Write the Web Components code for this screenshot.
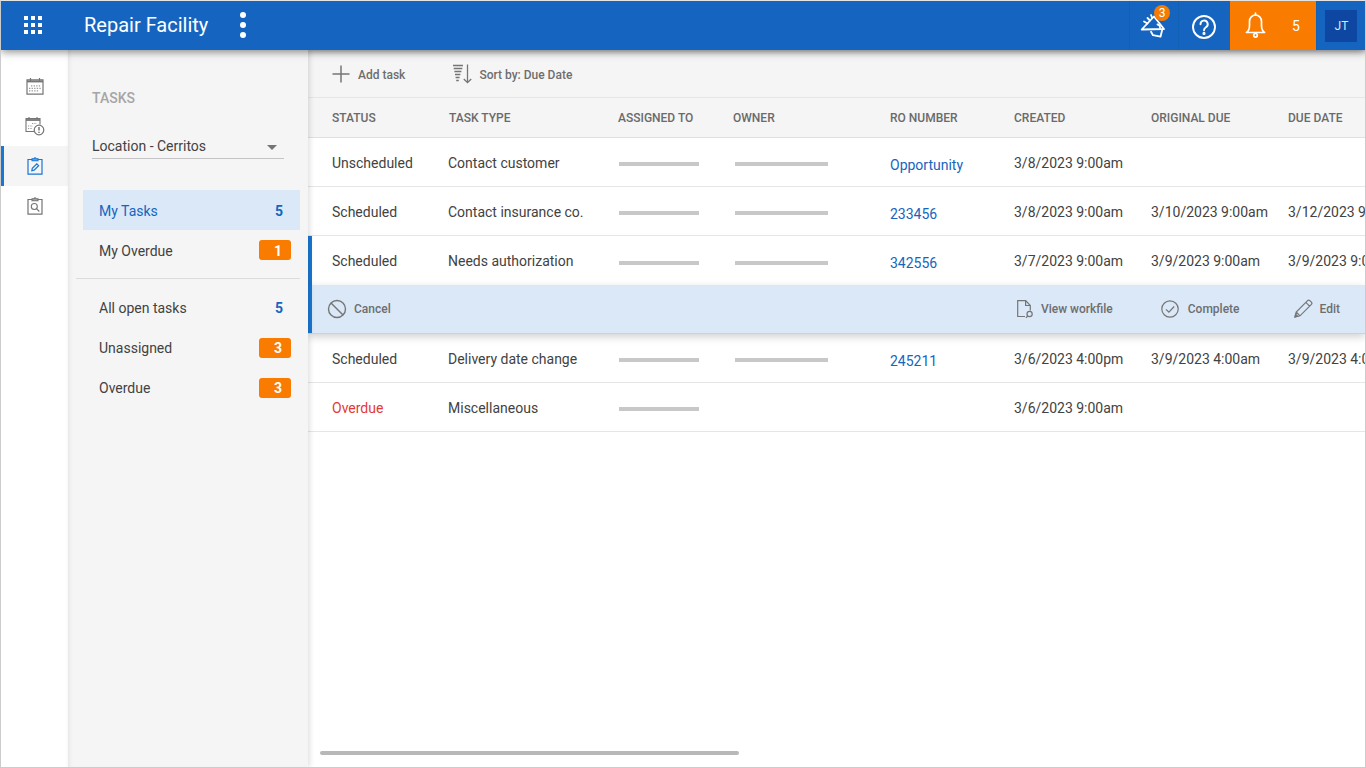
<!DOCTYPE html>
<html lang="en"><head><meta charset="utf-8"><title>Repair Facility</title>
<style>
html,body{margin:0;padding:0;height:100%;background:#fff;overflow:hidden}
body{font-family:Roboto,"Liberation Sans",sans-serif;font-size:14px;color:#424242}
</style></head><body>
<app-shell>
  <top-bar slot="top"></top-bar>
  <nav-rail slot="rail"></nav-rail>
  <task-sidebar slot="side"></task-sidebar>
  <task-main slot="main">
    <task-toolbar></task-toolbar>
    <task-head></task-head>
    <task-row status="Unscheduled" type="Contact customer" a="1" o="1" ro="Opportunity" created="3/8/2023 9:00am"></task-row>
    <task-row status="Scheduled" type="Contact insurance co." a="1" o="1" ro="233456" created="3/8/2023 9:00am" orig="3/10/2023 9:00am" due="3/12/2023 9:00am"></task-row>
    <task-row selected status="Scheduled" type="Needs authorization" a="1" o="1" ro="342556" created="3/7/2023 9:00am" orig="3/9/2023 9:00am" due="3/9/2023 9:00am"></task-row>
    <task-actions></task-actions>
    <task-row status="Scheduled" type="Delivery date change" a="1" o="1" ro="245211" created="3/6/2023 4:00pm" orig="3/9/2023 4:00am" due="3/9/2023 4:00am"></task-row>
    <task-row overdue status="Overdue" type="Miscellaneous" a="1" created="3/6/2023 9:00am"></task-row>
  </task-main>
</app-shell>
<script>
const ICONS={
 plus:'<svg viewBox="0 0 20 20" width="20" height="20" fill="none" stroke="#757575" stroke-width="1.5"><path d="M10 1.500v17M1.500 10h17"/></svg>',
 sort:'<svg viewBox="0 0 22 22" width="22" height="22" fill="none" stroke="#757575" stroke-width="1.3"><path d="M1 2.500h10M1.700 5.500h8.600M2.400 8.500h7M3 11.500h5.400M3.600 14.500h4M4.200 17.500h2.600M15.500 1.500v18M11.800 16l3.700 3.700 3.700-3.700"/></svg>',
 cancel:'<svg viewBox="0 0 20 20" width="20" height="20" fill="none" stroke="#757575" stroke-width="1.4"><circle cx="10" cy="10" r="8.500"/><path d="M4 4l12 12"/></svg>',
 file:'<svg viewBox="0 0 20 20" width="20" height="20" fill="none" stroke="#757575" stroke-width="1.2"><path d="M10 17.500H2.700V1.700h8l4.600 4.800v5M10.600 1.700v4.800h4.700"/><circle cx="14.600" cy="15" r="2.600"/><path d="M12.700 17l-1.800 1.800"/></svg>',
 check:'<svg viewBox="0 0 20 20" width="20" height="20" fill="none" stroke="#757575" stroke-width="1.2"><circle cx="10" cy="10" r="8.200"/><path d="M6 10.300l2.900 2.900L14.200 7.500"/></svg>',
 pencil:'<svg viewBox="0 0 20 20" width="20" height="20" fill="none" stroke="#757575" stroke-width="1.2"><path d="M2 18l1.200-5L14.600 1.600a1.600 1.600 0 0 1 2.200 0l1.600 1.600a1.600 1.600 0 0 1 0 2.200L7 16.800zM3.200 13L7 16.800M12.800 3.400l3.800 3.800"/><path d="M2 18l2.600-.7-1.900-1.900z" fill="#757575"/></svg>',
 apps:'<svg viewBox="0 0 18 18" width="18" height="18" fill="#fff"><path d="M0 0h4v4H0zM7 0h4v4H7zM14 0h4v4h-4zM0 7h4v4H0zM7 7h4v4H7zM14 7h4v4h-4zM0 14h4v4H0zM7 14h4v4H7zM14 14h4v4h-4z"/></svg>',
 kebab:'<svg viewBox="0 0 6 26" width="6" height="26" fill="#fff"><circle cx="3" cy="3" r="3"/><circle cx="3" cy="13" r="3"/><circle cx="3" cy="23" r="3"/></svg>',
 horn:'<svg viewBox="0 0 28 28" width="28" height="28" fill="none" stroke="#fff" stroke-width="1.800" stroke-linejoin="round" stroke-linecap="round"><path d="M2.700 17.500L15 4.500l10 12.500z"/><path d="M12 19.800l2 3.400 7.500 1.500 1.600-6.400"/><path d="M18.500 12.500a3 3 0 0 1 2.500 3.500"/><path d="M5 9.500l3.500 2M8.500 6l2.500 2.500M12 3l1 2.500"/></svg>',
 help:'<svg viewBox="0 0 26 26" width="26" height="26" fill="none" stroke="#fff" stroke-width="1.900" stroke-linecap="round"><circle cx="13" cy="13" r="11"/><path d="M9.500 10.200a3.600 3.600 0 1 1 5.400 3.100c-1.300.8-1.900 1.500-1.900 2.900"/><circle cx="13" cy="19.400" r=".6" fill="#fff"/></svg>',
 bell:'<svg viewBox="0 0 22 28" width="22" height="28" fill="none" stroke="#fff" stroke-width="1.700" stroke-linejoin="round"><path d="M1.500 20.500c2-1.500 3-3.500 3-7V9.500a6 6.500 0 0 1 12 0v4c0 3.500 1 5.500 3 7z"/><path d="M10.500 1v2" stroke-linecap="round"/><circle cx="10.500" cy="23.300" r="1.800"/></svg>',
 cal:'<svg viewBox="0 0 18 18" width="18" height="18" fill="none" stroke="#757575"><path stroke-width="1.200" d="M1 2.800h16v14.400H1z"/><path stroke-width="2" d="M1 4.400h16"/><path stroke-width="1.200" d="M4.500 1v3M13.500 1v3"/><path stroke-width="1.300" stroke-opacity=".75" stroke-dasharray="1.300 1.300" d="M5 8.800h10M3 11.300h12M3 13.800h10"/></svg>',
 calwarn:'<svg viewBox="0 0 20 20" width="20" height="20" fill="none" stroke="#757575"><path stroke-width="1.100" d="M9 15.500H1V2.500h14v6"/><path stroke-width="1.800" d="M1 4h14"/><path stroke-width="1.100" d="M4 1v2.500M12 1v2.500"/><path stroke-width="1.200" stroke-opacity=".75" stroke-dasharray="1.200 1.200" d="M7 7.500h5M3 10h5M3 12.500h4"/><circle stroke-width="1.200" cx="14" cy="14" r="4.800" fill="#fff"/><path stroke-width="1.500" d="M14 11v3.500M14 15.800v1.200"/></svg>',
 clip:'<svg viewBox="0 0 16 18" width="16" height="18" fill="none" stroke="#1976D2"><path stroke-width="1.200" d="M5 2.500H1v14.700h14V2.500h-4"/><path stroke-width="1.100" d="M5 3.800V1.800h2a1 1 0 0 1 2 0h2v2z" fill="#6ea8e3"/><path stroke-width="1.200" d="M4.800 13.800l.5-2.400 4.500-4.500 1.800 1.800-4.500 4.500z"/></svg>',
 clipfind:'<svg viewBox="0 0 16 18" width="16" height="18" fill="none" stroke="#757575"><path stroke-width="1.200" d="M5 2.500H1v14.700h14V2.500h-4"/><path stroke-width="1.100" d="M5 3.800V1.800h2a1 1 0 0 1 2 0h2v2z" fill="#aaa"/><circle stroke-width="1.100" cx="7.300" cy="9.500" r="3"/><path stroke-width="1.200" d="M9.500 11.700l2.800 2.800"/></svg>'
};
function def(name,html){customElements.define(name,class extends HTMLElement{
  constructor(){super();this.attachShadow({mode:'open'});}
  connectedCallback(){this.shadowRoot.innerHTML=typeof html==='function'?html(this):html;}
});}
def('x-icon',el=>`<style>:host{display:inline-flex;flex:none;line-height:0}</style>${ICONS[el.getAttribute('name')]}`);

def('app-shell',`<style>
:host{display:block;width:1366px;height:768px;box-sizing:border-box;border:1px solid #ccc;border-top-color:#e4e4e4;position:relative;overflow:hidden}
.wrap{display:flex;flex-direction:column;height:100%}
.body{flex:1;display:flex;min-height:0}
::slotted([slot=top]){position:relative;z-index:3}
::slotted([slot=rail]){flex:none}
::slotted([slot=side]){flex:none;position:relative;z-index:2}
::slotted([slot=main]){flex:1;min-width:0}
</style><div class="wrap"><slot name="top"></slot><div class="body"><slot name="rail"></slot><slot name="side"></slot><slot name="main"></slot></div></div>`);

def('top-bar',`<style>
:host{display:flex;align-items:stretch;height:49px;background:#1565C0;color:#fff;box-shadow:0 2px 8px rgba(0,0,0,.45)}
.apps{width:18px;margin:15px 0 0 23px;height:18px}
.title{margin:0 0 0 42px;font:400 20px/48px Roboto,sans-serif;white-space:nowrap}
.kebab{margin:11px 0 0 32px;height:26px}
.sp{flex:1}
.cell{display:flex;align-items:center;justify-content:center;position:relative;box-sizing:border-box}
.horn{width:50px;border-left:1px solid #1262b4;border-right:1px solid #1262b4}
.horn x-icon{margin-left:-2px;margin-top:1px}
.badge{position:absolute;left:24px;top:4px;width:16px;height:16px;border-radius:50%;background:#F57C00;font:400 12px/16px Roboto,sans-serif;text-align:center}
.help{width:51px}
.help x-icon{margin:2px 2px 0 0}
.bell{width:86px;background:#F97C00;justify-content:flex-start}
.bell x-icon{margin-left:15px}
.bell span{margin-left:25px;font:400 14px Roboto,sans-serif}
.user{width:49px;border-left:1px solid #1262b4;padding-left:8px;justify-content:flex-start}
.av{width:32px;height:32px;box-sizing:border-box;padding-left:1px;background:#0D47A1;font:400 12px/32px Roboto,sans-serif;text-align:center;color:#dfe7f5}
</style>
<x-icon class="apps" name="apps"></x-icon><div class="title">Repair Facility</div><x-icon class="kebab" name="kebab"></x-icon><div class="sp"></div>
<div class="cell horn"><x-icon name="horn"></x-icon><div class="badge">3</div></div>
<div class="cell help"><x-icon name="help"></x-icon></div>
<div class="cell bell"><x-icon name="bell"></x-icon><span>5</span></div>
<div class="cell user"><div class="av">JT</div></div>`);

def('nav-rail',`<style>
:host{display:flex;flex-direction:column;width:67px;background:#fff;padding-top:16px;box-sizing:border-box}
.i{height:40px;display:flex;align-items:center;justify-content:center;box-sizing:border-box}
.i.on{background:#f5f5f5;border-left:3px solid #1976D2;padding-right:3px}
</style>
<div class="i"><x-icon name="cal"></x-icon></div>
<div class="i"><x-icon name="calwarn"></x-icon></div>
<div class="i on"><x-icon name="clip"></x-icon></div>
<div class="i"><x-icon name="clipfind"></x-icon></div>`);

def('side-item',el=>{const c=el.getAttribute('count'),k=el.getAttribute('kind')||'';return `<style>
:host{display:flex;align-items:center;justify-content:space-between;height:40px;box-sizing:border-box;padding:0 9px 0 16px;font:400 14px Roboto,sans-serif;color:#424242;margin-left:15px;margin-right:8px}
:host([active]){background:#DAE8F8;color:#1565C0}
.n{font-weight:700;color:#1565C0;padding-right:8px;font-size:14px}
.b{width:32px;height:20px;box-sizing:border-box;background:#F97C00;border-radius:3px;color:#fff;font-weight:700;font-size:14px;line-height:20px;text-align:right;padding-right:9px}
:host([shift]) .t,:host([shift]) .n{margin-top:2px}
:host([shift]) .b{line-height:22px}
</style><span class="t"><slot></slot></span><span class="${k==='badge'?'b':'n'}">${c}</span>`});

def('task-sidebar',`<style>
:host{display:block;width:240px;height:100%;background:#f5f5f5;box-shadow:2px 0 5px rgba(0,0,0,.12), inset 4px 0 4px -3px rgba(0,0,0,.08);box-sizing:border-box;padding-top:40px}
.h{margin:0 0 0 24px;font:500 14px/16px Roboto,sans-serif;color:#a6a6a6}
.sel{margin:17px 24px 0 24px;height:36px;box-sizing:border-box;border-bottom:1px solid #c4c4c4;display:flex;align-items:center;justify-content:space-between;font:400 14px/16px Roboto,sans-serif;color:#424242;padding:10px 7px 0 0}
.car{width:0;height:0;border:5px solid transparent;border-top:5px solid #757575;border-bottom:0;margin:3px 0 0 0}
.list{margin-top:31px}
hr{border:0;border-top:1px solid #dcdcdc;margin:8px 8px 9px 8px}
</style>
<div class="h">TASKS</div>
<div class="sel"><span>Location - Cerritos</span><span class="car"></span></div>
<div class="list">
<side-item shift active count="5">My Tasks</side-item>
<side-item shift kind="badge" count="1">My Overdue</side-item>
<hr>
<side-item count="5">All open tasks</side-item>
<side-item kind="badge" count="3">Unassigned</side-item>
<side-item kind="badge" count="3">Overdue</side-item>
</div>`);

def('task-main',`<style>
:host{display:block;position:relative;background:#fff;overflow:hidden;height:100%}
.bar{position:absolute;left:12px;top:701px;width:419px;height:4px;background:#b8b8b8;border-radius:2px}
</style><slot></slot><div class="bar"></div>`);

def('task-toolbar',`<style>
:host{display:flex;align-items:center;height:47px;background:#f5f5f5;border-bottom:1px solid #e6e6e6;padding-left:23px;font:500 12px Roboto,sans-serif;color:#6e6e6e;box-shadow:inset 0 6px 6px -6px rgba(0,0,0,.25)}
.a{display:flex;align-items:center}
.a span{margin:2px 0 0 7px}
.s{margin-left:47px}
.s span{margin:3px 0 0 5px}
</style>
<div class="a"><x-icon name="plus"></x-icon><span>Add task</span></div>
<div class="a s"><x-icon name="sort"></x-icon><span>Sort by: Due Date</span></div>`);

const COLS='grid-template-columns:140px 170px 115px 157px 124px 137px 137px 200px;';
def('task-head',`<style>
:host{display:grid;${COLS}height:40px;box-sizing:border-box;align-items:center;background:#f5f5f5;border-bottom:1px solid #e0e0e0;font:500 12px Roboto,sans-serif;color:#6a6a6a;white-space:nowrap}
div:nth-of-type(1){padding-left:24px}
div:nth-of-type(2){padding-left:1px}
</style><div>STATUS</div><div>TASK TYPE</div><div>ASSIGNED TO</div><div>OWNER</div><div>RO NUMBER</div><div>CREATED</div><div>ORIGINAL DUE</div><div>DUE DATE</div>`);

def('task-row',el=>{const g=n=>el.getAttribute(n)||'';return `<style>
:host{display:grid;${COLS}height:48px;align-items:center;background:#fff;border-bottom:1px solid #e6e6e6;font:400 14px Roboto,sans-serif;color:#424242;white-space:nowrap;position:relative}
:host([selected]){height:49px;border-bottom:0}
:host([selected])::before{content:"";position:absolute;left:0;top:0;bottom:0;width:4px;background:#1976D2}
:host([overdue]) .st{color:#E53935}
.st{padding-left:24px}
.c{margin-top:1px}
.l{display:block;height:4px;background:#c8c8c8;margin-top:4px}
.as{padding-left:1px;width:80px}.ow{padding-left:2px;width:93px}
.c.ro{color:#1565C0;margin-top:5px}
</style>
<div class="c st">${g('status')}</div><div class="c">${g('type')}</div>
<div class="as">${g('a')?'<span class="l"></span>':''}</div><div class="ow">${g('o')?'<span class="l"></span>':''}</div>
<div class="c ro">${g('ro')}</div><div class="c">${g('created')}</div><div class="c">${g('orig')}</div><div class="c">${g('due')}</div>`});

def('task-actions',`<style>
:host{display:flex;align-items:center;height:49px;background:#DAE8F8;position:relative;z-index:1;border-bottom:1px solid #c9d3de;box-shadow:0 3px 8px rgba(0,0,0,.18);box-sizing:border-box;padding-bottom:1px;font:500 12px Roboto,sans-serif;color:#6e6e6e}
:host::before{content:"";position:absolute;left:0;top:0;bottom:0;width:4px;background:#1976D2}
.a{display:flex;align-items:center;gap:7px}
.c{margin-left:19px}.sp{flex:1}
.v{margin-right:47px;gap:6px}.d{margin-right:53px;gap:8px}.e{margin-right:25px;gap:7px}
</style>
<div class="a c"><x-icon name="cancel"></x-icon><span>Cancel</span></div><div class="sp"></div>
<div class="a v"><x-icon name="file"></x-icon><span>View workfile</span></div>
<div class="a d"><x-icon name="check"></x-icon><span>Complete</span></div>
<div class="a e"><x-icon name="pencil"></x-icon><span>Edit</span></div>`);
</script>
</body></html>
